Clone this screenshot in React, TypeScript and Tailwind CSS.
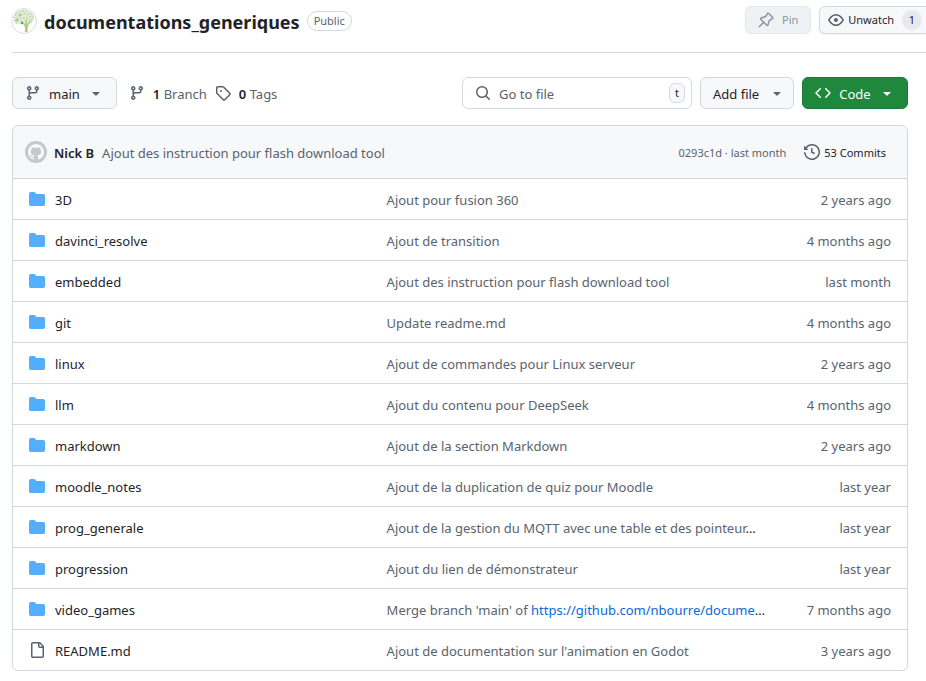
import type { ReactNode } from "react";

const paths = {
  branch:
    "M9.5 3.25a2.25 2.25 0 1 1 3 2.122V6A2.5 2.5 0 0 1 10 8.5H6a1 1 0 0 0-1 1v1.128a2.251 2.251 0 1 1-1.5 0V5.372a2.25 2.25 0 1 1 1.5 0v1.836A2.493 2.493 0 0 1 6 7h4a1 1 0 0 0 1-1v-.628A2.25 2.25 0 0 1 9.5 3.25Zm-6 0a.75.75 0 1 0 1.5 0 .75.75 0 0 0-1.5 0Zm8.25-.75a.75.75 0 1 0 0 1.5.75.75 0 0 0 0-1.5ZM4.25 12a.75.75 0 1 0 0 1.5.75.75 0 0 0 0-1.5Z",
  tag: "M1 7.775V2.75C1 1.784 1.784 1 2.75 1h5.025c.464 0 .91.184 1.238.513l6.25 6.25a1.75 1.75 0 0 1 0 2.474l-5.026 5.026a1.75 1.75 0 0 1-2.474 0l-6.25-6.25A1.752 1.752 0 0 1 1 7.775Zm1.5 0c0 .066.026.13.073.177l6.25 6.25a.25.25 0 0 0 .354 0l5.025-5.025a.25.25 0 0 0 0-.354l-6.25-6.25a.25.25 0 0 0-.177-.073H2.75a.25.25 0 0 0-.25.25ZM6 5a1 1 0 1 1 0 2 1 1 0 0 1 0-2Z",
  search:
    "M10.68 11.74a6 6 0 0 1-7.922-8.982 6 6 0 0 1 8.982 7.922l3.04 3.04a.749.749 0 0 1-.326 1.275.749.749 0 0 1-.734-.215ZM11.5 7a4.499 4.499 0 1 0-8.997 0A4.499 4.499 0 0 0 11.5 7Z",
  pin: "m11.294.984 3.722 3.722a1.75 1.75 0 0 1-.504 2.826l-1.327.613a3.089 3.089 0 0 0-1.707 2.084l-.584 2.454c-.317 1.332-1.972 1.8-2.94.832L5.75 11.311 1.78 15.28a.749.749 0 1 1-1.06-1.06l3.969-3.97-2.204-2.204c-.968-.968-.5-2.623.832-2.94l2.454-.584a3.08 3.08 0 0 0 2.084-1.707l.613-1.327a1.75 1.75 0 0 1 2.826-.504ZM6.283 9.723l2.732 2.731a.25.25 0 0 0 .42-.119l.584-2.454a4.586 4.586 0 0 1 2.537-3.098l1.328-.613a.25.25 0 0 0 .072-.404l-3.722-3.722a.25.25 0 0 0-.404.072l-.613 1.328a4.584 4.584 0 0 1-3.098 2.537l-2.454.584a.25.25 0 0 0-.119.42l2.731 2.732Z",
  eye: "M8 2c1.981 0 3.671.992 4.933 2.078 1.27 1.091 2.187 2.345 2.637 3.023a1.62 1.62 0 0 1 0 1.798c-.45.678-1.367 1.932-2.637 3.023C11.67 13.008 9.981 14 8 14c-1.981 0-3.671-.992-4.933-2.078C1.797 10.83.88 9.576.43 8.898a1.62 1.62 0 0 1 0-1.798c.45-.677 1.367-1.931 2.637-3.022C4.33 2.992 6.019 2 8 2ZM1.679 7.932a.12.12 0 0 0 0 .136c.411.622 1.241 1.75 2.366 2.717C5.176 11.758 6.527 12.5 8 12.5c1.473 0 2.825-.742 3.955-1.715 1.124-.967 1.954-2.096 2.366-2.717a.12.12 0 0 0 0-.136c-.412-.621-1.242-1.75-2.366-2.717C10.824 4.242 9.473 3.5 8 3.5c-1.473 0-2.825.742-3.955 1.715-1.124.967-1.954 2.096-2.366 2.717ZM8 10a2 2 0 1 1-.001-3.999A2 2 0 0 1 8 10Z",
  code: "m11.28 3.22 4.25 4.25a.75.75 0 0 1 0 1.06l-4.25 4.25a.749.749 0 0 1-1.275-.326.749.749 0 0 1 .215-.734L13.94 8l-3.72-3.72a.749.749 0 0 1 .326-1.275.749.749 0 0 1 .734.215Zm-6.56 0a.751.751 0 0 1 1.042.018.751.751 0 0 1 .018 1.042L2.06 8l3.72 3.72a.749.749 0 0 1-.326 1.275.749.749 0 0 1-.734-.215L.47 8.53a.75.75 0 0 1 0-1.06Z",
  caret:
    "m4.427 7.427 3.396 3.396a.25.25 0 0 0 .354 0l3.396-3.396A.25.25 0 0 0 11.396 7H4.604a.25.25 0 0 0-.177.427Z",
  history:
    "m.427 1.927 1.215 1.215a8.002 8.002 0 1 1-1.6 5.685.75.75 0 1 1 1.493-.154 6.5 6.5 0 1 0 1.18-4.458l1.358 1.358A.25.25 0 0 1 3.896 6H.25A.25.25 0 0 1 0 5.75V2.104a.25.25 0 0 1 .427-.177ZM7.75 4a.75.75 0 0 1 .75.75v2.992l2.028.812a.75.75 0 0 1-.557 1.392l-2.5-1A.751.751 0 0 1 7 8.25v-3.5A.75.75 0 0 1 7.75 4Z",
  folder:
    "M1.75 1A1.75 1.75 0 0 0 0 2.75v10.5C0 14.216.784 15 1.75 15h12.5A1.75 1.75 0 0 0 16 13.25v-8.5A1.75 1.75 0 0 0 14.25 3H7.5a.25.25 0 0 1-.2-.1l-.9-1.2C6.07 1.26 5.55 1 5 1H1.75Z",
  file: "M2 1.75C2 .784 2.784 0 3.75 0h6.586c.464 0 .909.184 1.237.513l2.914 2.914c.329.328.513.773.513 1.237v9.586A1.75 1.75 0 0 1 13.25 16h-9.5A1.75 1.75 0 0 1 2 14.25Zm1.75-.25a.25.25 0 0 0-.25.25v12.5c0 .138.112.25.25.25h9.5a.25.25 0 0 0 .25-.25V6h-2.75A1.75 1.75 0 0 1 9 4.25V1.5Zm6.75.062V4.25c0 .138.112.25.25.25h2.688l-.011-.013-2.914-2.914-.013-.011Z",
  github:
    "M8 0c4.42 0 8 3.58 8 8a8.013 8.013 0 0 1-5.45 7.59c-.4.08-.55-.17-.55-.38 0-.27.01-1.13.01-2.2 0-.75-.25-1.23-.54-1.48 1.78-.2 3.65-.88 3.65-3.95 0-.88-.31-1.59-.82-2.15.08-.2.36-1.02-.08-2.12 0 0-.67-.22-2.2.82-.64-.18-1.32-.27-2-.27-.68 0-1.36.09-2 .27-1.53-1.03-2.2-.82-2.2-.82-.44 1.1-.16 1.92-.08 2.12-.51.56-.82 1.28-.82 2.15 0 3.06 1.86 3.75 3.64 3.95-.23.2-.44.55-.51 1.07-.46.21-1.61.55-2.33-.66-.15-.24-.6-.83-1.23-.82-.67.01-.27.38.01.53.34.19.73.9.82 1.13.16.45.68 1.31 2.69.94 0 .67.01 1.3.01 1.49 0 .21-.15.45-.55.38A7.995 7.995 0 0 1 0 8c0-4.42 3.58-8 8-8Z",
};

function Icon({ name, className = "" }: { name: keyof typeof paths; className?: string }) {
  return (
    <svg viewBox="0 0 16 16" fill="currentColor" aria-hidden="true" className={`size-4 shrink-0 ${className}`}>
      <path d={paths[name]} />
    </svg>
  );
}

function TreeAvatar() {
  return (
    <svg viewBox="0 0 26 26" aria-hidden="true" className="size-[26px] shrink-0">
      <circle cx="13" cy="13" r="12.5" fill="#fdfefc" stroke="#d9dde0" />
      <path d="M4 9c-2 2-2 5 0 6 2 2 5 1 7 0 2 1 6 1 8-1 3 0 5-3 4-5 0-3-3-5-5-5-3-3-7-3-9-1-3 0-6 3-5 6Z" fill="#e0ecd4" />
      <path d="M14.500 24c.5-3 .2-6-1-7.500L10 13.500M16 24c-.3-4-.2-6 1-8l3.500-3M15.200 24V12" fill="none" stroke="#a9cc88" strokeWidth="1.500" />
      <g fill="none" stroke="#b0cd97" strokeWidth="1.400" strokeDasharray="1.200 1.800">
        <path d="M3 10c1-4 5-7 10-7s9 3 10 7" />
        <path d="M4 13c2-4 5-6 9-7s7 3 9 7" />
        <path d="M5 15c2-3 5-5 8-5s5 2 7 4" />
      </g>
      <g fill="#6f9a4f">
        <circle cx="9" cy="7" r=".8" />
        <circle cx="11" cy="15" r="1.200" />
        <circle cx="6" cy="12" r=".8" />
      </g>
    </svg>
  );
}

type Entry = { name: string; message: ReactNode; age: string; file?: boolean };

const ellipsis = <span className="text-[#1f2328]">…</span>;

const entries: Entry[] = [
  { name: "3D", message: "Ajout pour fusion 360", age: "2 years ago" },
  { name: "davinci_resolve", message: "Ajout de transition", age: "4 months ago" },
  { name: "embedded", message: "Ajout des instruction pour flash download tool", age: "last month" },
  { name: "git", message: "Update readme.md", age: "4 months ago" },
  { name: "linux", message: "Ajout de commandes pour Linux serveur", age: "2 years ago" },
  { name: "llm", message: "Ajout du contenu pour DeepSeek", age: "4 months ago" },
  { name: "markdown", message: "Ajout de la section Markdown", age: "2 years ago" },
  { name: "moodle_notes", message: "Ajout de la duplication de quiz pour Moodle", age: "last year" },
  {
    name: "prog_generale",
    message: <>Ajout de la gestion du MQTT avec une table et des pointeur{ellipsis}</>,
    age: "last year",
  },
  { name: "progression", message: "Ajout du lien de démonstrateur", age: "last year" },
  {
    name: "video_games",
    message: (
      <>
        Merge branch 'main' of{" "}
        <a href="#merge" className="text-[#0969da]">
          https://github.com/nbourre/docume
        </a>
        {ellipsis}
      </>
    ),
    age: "7 months ago",
  },
  { name: "README.md", message: "Ajout de documentation sur l'animation en Godot", age: "3 years ago", file: true },
];

export default function App() {
  return (
    <div className="min-h-screen overflow-hidden bg-white pb-2.5 font-['Segoe_UI','Noto_Sans',sans-serif] text-[13px] leading-5 text-[#1f2328]">
      <header className="ml-3 flex h-[53px] items-start justify-between border-b border-[#d1d9e0]">
        <div className="-ml-px flex items-center gap-[7px] pt-2">
          <TreeAvatar />
          <h1 className="pt-0.5 text-lg leading-6 font-bold">
            <a href="#repo">documentations_generiques</a>
          </h1>
          <span className="rounded-full border border-[#d1d9e0] px-1.5 text-[11px] leading-[18px] text-[#59636e]">
            Public
          </span>
        </div>
        <div className="flex gap-2 pt-1.5 text-[11px]">
          <button disabled className="flex h-7 items-center gap-2 rounded-md border border-[#e3e8ec] bg-[#eff2f5] px-3 text-[#8c959f]">
            <Icon name="pin" />
            Pin
          </button>
          <button className="flex h-7 items-center gap-1 rounded-l-md border border-r-0 border-[#d1d9e0] bg-[#f6f8fa] pr-1 pl-2 shadow-xs">
            <Icon name="eye" className="text-[#59636e]" />
            Unwatch
            <span className="ml-1 flex h-5 min-w-5 items-center justify-center rounded-full bg-[#e7eaed] px-1.5">1</span>
          </button>
        </div>
      </header>

      <main className="mr-[18px] ml-3 pt-6">
        <div className="flex items-center justify-between">
          <div className="flex items-center">
            <button className="flex h-8 items-center gap-2 rounded-md border border-[#d1d9e0] bg-[#f6f8fa] px-3">
              <Icon name="branch" className="text-[#59636e]" />
              <span className="pt-0.5">main</span>
              <Icon name="caret" className="text-[#59636e]" />
            </button>
            <a href="#branches" className="ml-3 flex items-center gap-2 text-[#59636e]">
              <Icon name="branch" />
              <span className="pt-0.5">
                <strong className="font-semibold text-[#1f2328]">1</strong> Branch
              </span>
            </a>
            <a href="#tags" className="ml-2 flex items-center gap-2 text-[#59636e]">
              <Icon name="tag" />
              <span className="pt-0.5">
                <strong className="font-semibold text-[#1f2328]">0</strong> Tags
              </span>
            </a>
          </div>
          <div className="flex gap-2">
            <label className="flex h-8 w-[230px] items-center gap-2 rounded-md border border-[#d1d9e0] px-3 pr-1.5">
              <Icon name="search" className="text-[#59636e]" />
              <input
                aria-label="Go to file"
                placeholder="Go to file"
                className="min-w-0 flex-1 pt-0.5 outline-none placeholder:text-[#59636e]"
              />
              <kbd className="flex h-5 w-4 items-center justify-center rounded-md border border-[#d1d9e0] bg-[#f6f8fa] font-['Segoe_UI','Noto_Sans',sans-serif] text-[11px]">
                t
              </kbd>
            </label>
            <button className="flex h-8 min-w-[94px] items-center justify-between gap-2 rounded-md border border-[#d1d9e0] bg-[#f6f8fa] pr-2 pl-3">
              <span className="pt-0.5">Add file</span>
              <Icon name="caret" className="text-[#59636e]" />
            </button>
            <button className="flex h-8 min-w-[106px] items-center justify-between gap-2 rounded-md border border-[#1c7a38] bg-[#1f883d] px-3 text-white">
              <Icon name="code" />
              <span className="pt-0.5">Code</span>
              <Icon name="caret" />
            </button>
          </div>
        </div>

        <div className="mt-4 overflow-hidden rounded-md border border-[#d1d9e0]">
          <div className="flex h-[52px] items-center bg-[#f6f8fa] pr-[21px] pl-3 text-[#59636e]">
            <span className="mr-[7px] flex size-[22px] items-center justify-center rounded-full bg-[#c6c7c8] text-[#f8f8f8]">
              <Icon name="github" />
            </span>
            <a href="#author" className="mr-2 pt-0.5 font-semibold text-[#1f2328]">
              Nick B
            </a>
            <a href="#commit" className="pt-0.5">
              Ajout des instruction pour flash download tool
            </a>
            <span className="ml-auto pt-0.5 text-[11px]">0293c1d · last month</span>
            <a href="#commits" className="ml-[18px] flex items-center gap-1 text-[11px] text-[#1f2328]">
              <Icon name="history" className="text-[#59636e]" />
              <span className="pt-0.5">53 Commits</span>
            </a>
          </div>
          <table className="w-full table-fixed border-separate border-spacing-0">
            <colgroup>
              <col className="w-2/5" />
              <col />
              <col className="w-[136px]" />
            </colgroup>
            <tbody>
              {entries.map((entry) => (
                <tr key={entry.name} className="h-[41px] text-[#59636e]">
                  <td className="border-t border-[#d1d9e0] px-4">
                    <div className="flex items-center gap-2.5">
                      <Icon name={entry.file ? "file" : "folder"} className={entry.file ? "" : "text-[#54aeff]"} />
                      <a href={`#${entry.name}`} className="pt-0.5 text-[#1f2328]">
                        {entry.name}
                      </a>
                    </div>
                  </td>
                  <td className="border-t border-[#d1d9e0] pt-0.5 pl-4 whitespace-nowrap">{entry.message}</td>
                  <td className="border-t border-[#d1d9e0] pt-0.5 pr-4 text-right">{entry.age}</td>
                </tr>
              ))}
            </tbody>
          </table>
        </div>
      </main>
    </div>
  );
}
